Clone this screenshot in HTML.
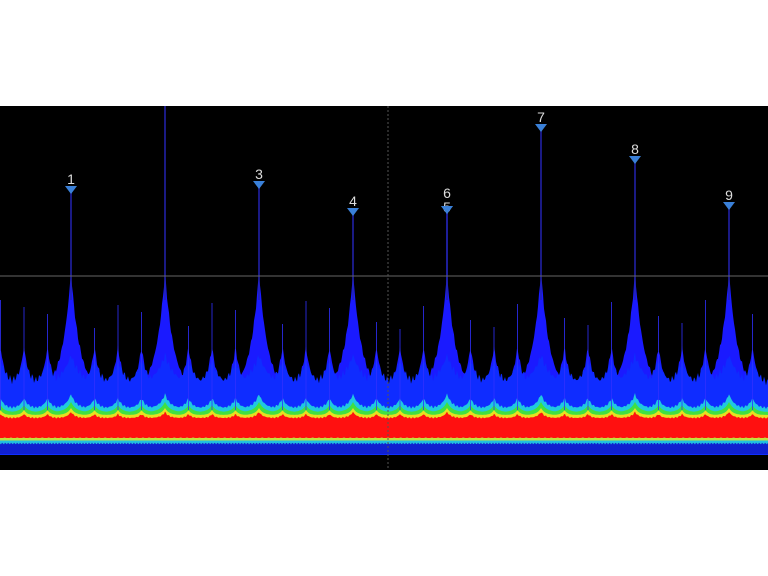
<!DOCTYPE html>
<html><head><meta charset="utf-8"><style>
html,body{margin:0;padding:0;background:#fff;width:768px;height:576px;overflow:hidden}
svg{position:absolute;left:0;top:0}
text{font-family:"Liberation Sans",sans-serif;font-size:14px;fill:#ddd}
</style></head><body>
<svg id="s" width="768" height="576" xmlns="http://www.w3.org/2000/svg">
<rect x="0" y="106" width="768" height="364" fill="#000"/>
<g id="plot"></g>
<line x1="0" y1="276" x2="768" y2="276" stroke="#666" stroke-width="1"/>
<line x1="388" y1="106" x2="388" y2="470" stroke="#555" stroke-width="1" stroke-dasharray="2,2"/>
<g id="mk"></g>
</svg>
<script>
var NS="http://www.w3.org/2000/svg",plot=document.getElementById('plot'),mk=document.getElementById('mk');
var peaks=[];for(var i=0;i<34;i++){var x=0.5+i*23.5;if(x>770)break;peaks.push({x:x,big:i%4==3});}
function env(x,base,hs,hb,ws,wb){var y=base;peaks.forEach(function(p){var d=Math.abs(x-p.x);var h=p.big?hb:hs,w=p.big?wb:ws;var v=base-h*Math.exp(-d/w);if(v<y)y=v;});return y;}
function band(top,bot,col){var d="M0,"+bot;for(var x=0;x<=768;x+=1){d+=" L"+x+","+top(x).toFixed(1);}d+=" L768,"+bot+" Z";var p=document.createElementNS(NS,'path');p.setAttribute('d',d);p.setAttribute('fill',col);plot.appendChild(p);}
function noise(x){return Math.sin(x*1.7)*1.5+Math.sin(x*4.3)*1.2;}
band(function(x){return env(x,392,45,120,6,9)+noise(x);},455,"#1a1aff");
band(function(x){return env(x,385,25,30,7,10)+noise(x)*1.5;},455,"#0f2cff");
band(function(x){return env(x,408,10,14,4,5)+noise(x)*0.5;},445,"#20c8e0");
band(function(x){return env(x,412,7,10,4,5);},442,"#40e040");
band(function(x){return env(x,415,5,7,3,4);},440,"#e8e020");
band(function(x){return env(x,418,4,6,3,4)+noise(x)*0.3;},438,"#ff1010");
band(function(x){return 438+Math.sin(x)*0.5;},442,"#c0e040");
band(function(x){return 440.5;},444,"#20c0e0");
band(function(x){return 443.5+Math.sin(x*2.1);},454,"#1020d0");
peaks.forEach(function(p,i){if(p.big)return;var l=document.createElementNS(NS,'line');l.setAttribute('x1',p.x);l.setAttribute('x2',p.x);l.setAttribute('y2',410);
var t=300+((i*37)%30);l.setAttribute('y1',t);l.setAttribute('stroke','#3030ff');l.setAttribute('stroke-width',1);l.setAttribute('opacity',0.8);plot.appendChild(l);});
var M=[[71,190,"1",184],[165,106,"",0],[259,185,"3",179],[353,212,"4",206],[447,210,"5",212],[447,210,"6",198],[541,128,"7",122],[635,160,"8",154],[729,206,"9",200]];
M.forEach(function(m){
 var l=document.createElementNS(NS,'line');l.setAttribute('x1',m[0]);l.setAttribute('x2',m[0]);l.setAttribute('y1',m[1]);l.setAttribute('y2',300);l.setAttribute('stroke','#2222b0');l.setAttribute('stroke-width',1.5);plot.appendChild(l);
 if(!m[2])return;
 var t=document.createElementNS(NS,'polygon');t.setAttribute('points',(m[0]-6)+","+(m[1]-4)+" "+(m[0]+6)+","+(m[1]-4)+" "+m[0]+","+(m[1]+4));t.setAttribute('fill','#3a80d8');mk.appendChild(t);
 var tx=document.createElementNS(NS,'text');tx.setAttribute('x',m[0]);tx.setAttribute('y',m[3]);tx.setAttribute('text-anchor','middle');tx.textContent=m[2];mk.appendChild(tx);
});
</script>
</body></html>
